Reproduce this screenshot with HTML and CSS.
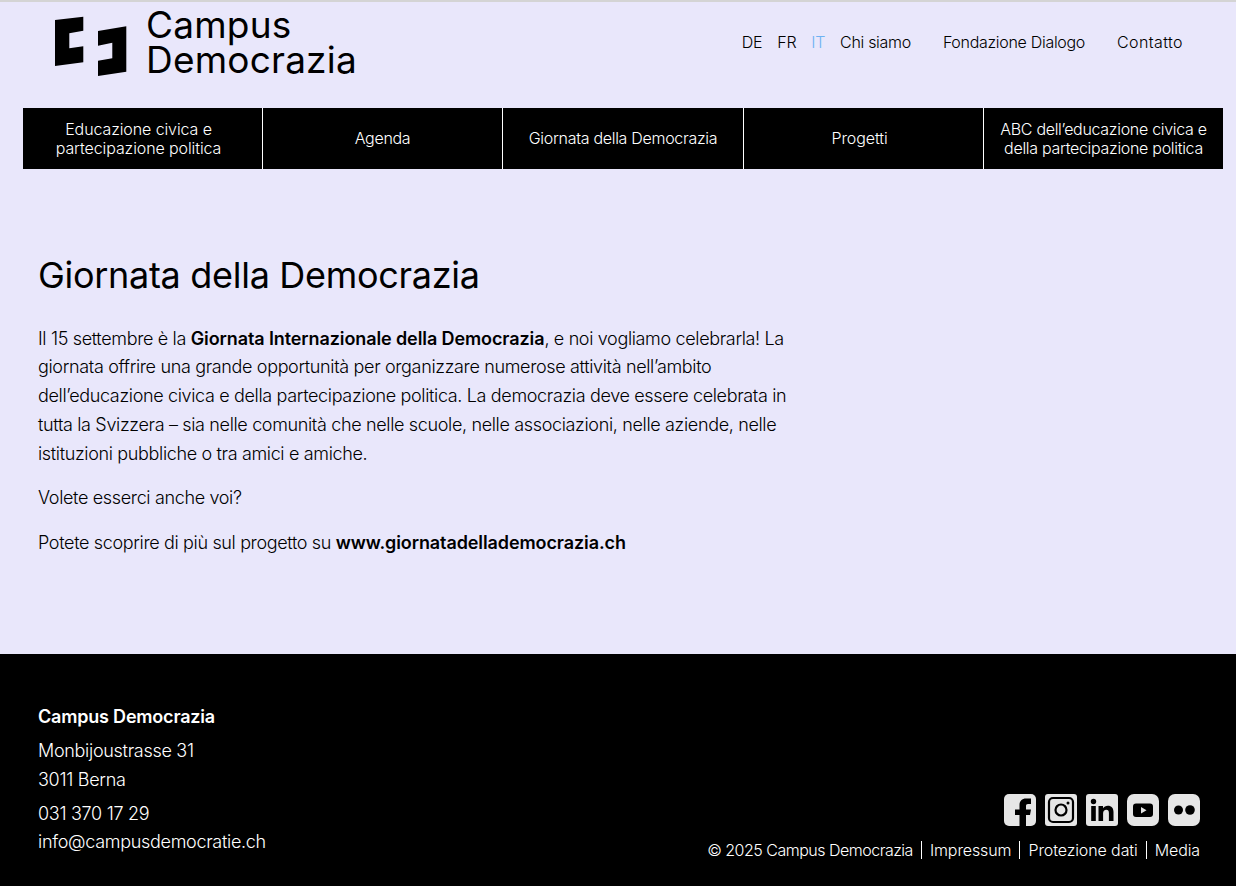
FILE: index.html
```html
<!DOCTYPE html>
<html lang="it">
<head>
    <meta charset="UTF-8">
    <meta name="viewport" content="width=device-width, initial-scale=1.0">
    <title>Giornata della Democrazia - Campus Democrazia</title>
    <link rel="stylesheet" href="styles.css">
</head>
<body>

<header class="top">
    <a class="logo" href="#">
        <svg class="logo-mark" width="72" height="62" viewBox="0 0 72 62">
            <path d="M0 5 L28.300 1.700 V15.700 L14.300 18.300 V33.300 L28.300 31.300 V47.300 L0 51 Z"/>
            <path d="M43 16 L71.300 11.300 V56.700 L43 61 V45.700 L57.300 43.300 V27.700 L43 30.700 Z"/>
        </svg>
        <span class="logo-text">Campus<br>Democrazia</span>
    </a>
    <nav class="meta-nav">
        <a href="#" class="lang">DE</a>
        <a href="#" class="lang">FR</a>
        <a href="#" class="lang lang-active">IT</a>
        <a href="#" class="meta-first">Chi siamo</a>
        <a href="#" class="meta-link">Fondazione Dialogo</a>
        <a href="#" class="meta-link meta-contact">Contatto</a>
    </nav>
</header>

<nav class="main-nav">
    <a href="#" class="nav-shift">Educazione civica e<br>partecipazione politica</a>
    <a href="#">Agenda</a>
    <a href="#">Giornata della Democrazia</a>
    <a href="#" class="nav-shift">Progetti</a>
    <a href="#">ABC dell’educazione civica e<br>della partecipazione politica</a>
</nav>

<main class="content">
    <h1>Giornata della Democrazia</h1>
    <p>Il 15 settembre è la <b>Giornata Internazionale della Democrazia</b>, e noi vogliamo celebrarla! La giornata offrire una grande opportunità per organizzare numerose attività nell’ambito dell’educazione civica e della partecipazione politica. La democrazia deve essere celebrata in tutta la Svizzera – sia nelle comunità che nelle scuole, nelle associazioni, nelle aziende, nelle istituzioni pubbliche o tra amici e amiche.</p>
    <p>Volete esserci anche voi?</p>
    <p>Potete scoprire di più sul progetto su <a href="#"><b>www.giornatadellademocrazia.ch</b></a></p>
</main>

<footer class="footer">
    <div class="address">
        <div class="address-name">Campus Democrazia</div>
        <div class="address-street">Monbijoustrasse 31<br>3011 Berna</div>
        <div class="address-contact">031 370 17 29<br>info@campusdemocratie.ch</div>
    </div>
    <div class="footer-right">
        <div class="social">
            <a href="#"><svg width="32" height="32" viewBox="0 0 32 32"><rect width="32" height="32" rx="5" fill="#e6e6e6"/><path d="M15.500 32 V21 H11 V15.500 H15.500 V11 C15.500 7 18 4.500 22 4.500 H27 V10 H24 C22.500 10 22 10.700 22 12 V15.500 H27 L26 21 H22 V32 Z" fill="#000"/></svg></a>
            <a href="#"><svg width="32" height="32" viewBox="0 0 32 32"><rect width="32" height="32" rx="3" fill="#e6e6e6"/><rect x="4" y="4" width="24" height="24" rx="4" fill="none" stroke="#000" stroke-width="2.200"/><circle cx="16" cy="16" r="5.500" fill="none" stroke="#000" stroke-width="2.200"/><circle cx="23" cy="9" r="1.500" fill="#000"/></svg></a>
            <a href="#"><svg width="32" height="32" viewBox="0 0 32 32"><rect width="32" height="32" rx="3" fill="#e6e6e6"/><circle cx="7.500" cy="7.500" r="2.700" fill="#000"/><rect x="5.200" y="12" width="4.600" height="15" fill="#000"/><path d="M12.500 12 H17 V14.200 C18 12.600 19.700 11.700 21.800 11.700 C25.600 11.700 27.500 14 27.500 18 V27 H22.900 V19 C22.900 17 22 15.800 20.300 15.800 C18.400 15.800 17.100 17 17.100 19.200 V27 H12.500 Z" fill="#000"/></svg></a>
            <a href="#"><svg width="32" height="32" viewBox="0 0 32 32"><rect width="32" height="32" rx="7" fill="#e6e6e6"/><rect x="6" y="9.500" width="20" height="13.500" rx="3" fill="#000"/><path d="M14 13 L19.500 16.200 L14 19.500 Z" fill="#e6e6e6"/></svg></a>
            <a href="#"><svg width="32" height="32" viewBox="0 0 32 32"><rect width="32" height="32" rx="7" fill="#e6e6e6"/><circle cx="10.500" cy="16" r="4.500" fill="#000"/><circle cx="22" cy="16" r="4.800" fill="#000"/></svg></a>
        </div>
        <div class="legal">
            <span class="legal-copy">© 2025 Campus Democrazia</span>
            <a href="#">Impressum</a>
            <a href="#">Protezione dati</a>
            <a href="#">Media</a>
        </div>
    </div>
</footer>

</body>
</html>
```

FILE: styles.css
```css
body {
    font-family: 'Inter', 'Noto Sans', sans-serif;
    font-weight: 300;
    background-color: #E9E7FB;
    color: #000;
    margin: 0;
    padding: 0;
    border-top: 2px solid #d4d4d4;
    font-size: 16px;
}

a {
    color: inherit;
    text-decoration: none;
}

b {
    font-weight: 600;
    letter-spacing: -0.1px;
}

.top {
    height: 106px;
    display: flex;
    justify-content: space-between;
    padding: 0 53px 0 55px;
}

.logo {
    display: flex;
    align-items: flex-start;
    gap: 19px;
}

.logo-mark {
    margin-top: 13px;
    fill: #000;
}

.logo-text {
    font-size: 37px;
    font-weight: 400;
    line-height: 35px;
    letter-spacing: 0.2px;
    margin-top: 5px;
}

.meta-nav {
    display: flex;
    align-items: center;
    height: 80px;
    font-size: 16px;
    letter-spacing: -0.3px;
}

.lang {
    margin-right: 15px;
}

.lang-active {
    color: #6EB2F2;
}

.meta-link {
    margin-left: 32px;
}

.meta-contact {
    letter-spacing: 0.4px;
}

.main-nav {
    display: grid;
    grid-template-columns: 239px 240px 241px 240px 240px;
    margin: 0 13px 0 23px;
    height: 61px;
    background-color: #000;
    color: #fff;
    font-size: 16px;
    line-height: 19px;
    letter-spacing: -0.3px;
}

.main-nav a {
    display: flex;
    align-items: center;
    justify-content: center;
    text-align: center;
    border-left: 1px solid #fff;
}

.main-nav a:first-child {
    border-left: 0;
}

.main-nav .nav-shift {
    padding-right: 8px;
    letter-spacing: -0.1px;
}

.content {
    height: 485px;
    box-sizing: border-box;
    padding: 84px 0 0 38px;
    width: 790px;
    font-size: 18px;
    line-height: 28.8px;
    letter-spacing: -0.35px;
}

.content h1 {
    font-size: 36px;
    line-height: 44px;
    font-weight: 400;
    letter-spacing: -0.3px;
    margin: 0 0 27.6px 0;
}

.content p {
    margin: 0 0 15.6px 0;
}

.footer {
    background-color: #000;
    color: #fff;
    height: 232px;
    box-sizing: border-box;
    padding: 49px 36px 0 38px;
    display: flex;
    justify-content: space-between;
    font-size: 18px;
    line-height: 28.8px;
    letter-spacing: -0.3px;
}

.address-name {
    font-weight: 600;
    margin-bottom: 5px;
    letter-spacing: -0.2px;
}

.address-street {
    margin-bottom: 6px;
}

.address-contact {
    line-height: 28px;
}

.footer-right {
    display: flex;
    flex-direction: column;
    align-items: flex-end;
    padding-top: 91px;
}

.social {
    display: flex;
    gap: 9px;
    height: 32px;
}

.social a {
    display: block;
    height: 32px;
}

.legal {
    display: flex;
    margin-top: 15px;
    font-size: 16px;
    line-height: 18px;
    letter-spacing: -0.1px;
}

.legal-copy {
    letter-spacing: -0.5px;
}

.legal a {
    margin-left: 8px;
    padding-left: 8px;
    border-left: 1px solid #fff;
}
```
